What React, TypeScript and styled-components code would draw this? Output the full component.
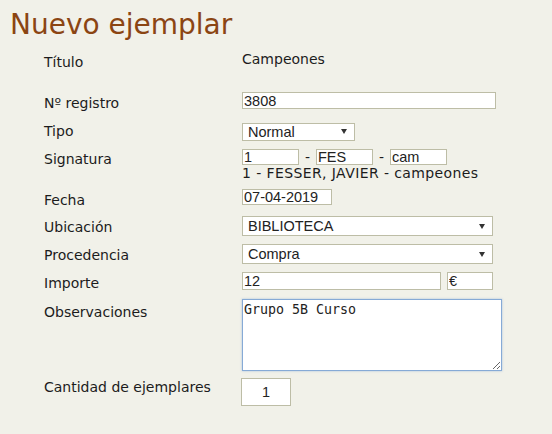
import React from "react";
import styled, { createGlobalStyle } from "styled-components";

const GlobalStyle = createGlobalStyle`
  html, body {
    margin: 0;
    background-color: #f1f1e9;
  }
  body {
    min-height: 100vh;
    font-family: "DejaVu Sans", Verdana, sans-serif;
  }
`;

const Page = styled.main`
  width: 552px;
  height: 434px;
  overflow: hidden;
`;

const Title = styled.h1`
  margin: 0;
  padding: 8px 0 8px 10px;
  font-size: 28px;
  line-height: 34px;
  font-weight: normal;
  color: #8b4513;
`;

const Form = styled.form`
  padding-left: 44px;
`;

const Row = styled.div<{ $h: number }>`
  display: grid;
  grid-template-columns: 198px 1fr;
  align-items: start;
  height: ${(p) => p.$h}px;
`;

const Label = styled.div<{ $pt?: number }>`
  font-size: 14px;
  line-height: 18px;
  padding-top: ${(p) => p.$pt ?? 0}px;
  color: #1c1c1c;
`;

const Text = styled.div<{ $lh?: number; $ls?: number }>`
  font-size: 14px;
  line-height: ${(p) => p.$lh ?? 18}px;
  letter-spacing: ${(p) => p.$ls ?? 0}px;
  color: #1c1c1c;
`;

const Line = styled.div`
  display: flex;
  align-items: center;
`;

const Input = styled.input<{ $w: number; $h: number; $center?: boolean }>`
  box-sizing: border-box;
  width: ${(p) => p.$w}px;
  height: ${(p) => p.$h}px;
  margin: 0;
  padding: 0 1px;
  border: 1px solid #bdbda6;
  background: #fff;
  font-family: "Liberation Sans", Arial, sans-serif;
  font-size: 14.5px;
  color: #222;
  text-align: ${(p) => (p.$center ? "center" : "left")};
  outline: none;
`;

const Dash = styled.span`
  width: 17px;
  text-align: center;
  font-size: 14px;
  color: #1c1c1c;
`;

const SelectBox = styled.span<{ $w: number; $h: number }>`
  position: relative;
  display: inline-block;
  width: ${(p) => p.$w}px;
  height: ${(p) => p.$h}px;

  &::after {
    content: "";
    position: absolute;
    right: 8px;
    top: 50%;
    margin-top: -2px;
    border-left: 3px solid transparent;
    border-right: 3px solid transparent;
    border-top: 5px solid #333;
    pointer-events: none;
  }
`;

const Select = styled.select`
  appearance: none;
  box-sizing: border-box;
  width: 100%;
  height: 100%;
  margin: 0;
  padding: 0 0 0 5px;
  border: 1px solid #bdbda6;
  border-radius: 0;
  background: #fff;
  font-family: "Liberation Sans", Arial, sans-serif;
  font-size: 14.5px;
  color: #222;
  outline: none;
`;

const Notes = styled.textarea`
  box-sizing: border-box;
  width: 260px;
  height: 72px;
  margin: 0;
  padding: 2px 1px;
  border: 1px solid #86aad6;
  box-shadow: 0 0 2px rgba(120, 160, 215, 0.6);
  background: #fff;
  font-family: "DejaVu Sans Mono", "Liberation Mono", monospace;
  font-size: 13.3px;
  color: #222;
  outline: none;
`;

const Qty = styled(Input)`
  margin-left: -1px;
`;

const Gap = styled.span`
  width: 6px;
`;

export default function App() {
  return (
    <Page>
      <GlobalStyle />
      <Title>Nuevo ejemplar</Title>
      <Form onSubmit={(e) => e.preventDefault()}>
        <Row $h={42}>
          <Label $pt={3}>Título</Label>
          <Text>Campeones</Text>
        </Row>
        <Row $h={30}>
          <Label $pt={2}>Nº registro</Label>
          <Input $w={254} $h={17} defaultValue="3808" />
        </Row>
        <Row $h={27}>
          <Label>Tipo</Label>
          <SelectBox $w={113} $h={18}>
            <Select defaultValue="Normal">
              <option>Normal</option>
            </Select>
          </SelectBox>
        </Row>
        <Row $h={40}>
          <Label $pt={1}>Signatura</Label>
          <div>
            <Line>
              <Input $w={57} $h={16} defaultValue="1" />
              <Dash>-</Dash>
              <Input $w={57} $h={16} defaultValue="FES" />
              <Dash>-</Dash>
              <Input $w={57} $h={16} defaultValue="cam" />
            </Line>
            <Text $lh={16} $ls={0.4}>
              1 - FESSER, JAVIER - campeones
            </Text>
          </div>
        </Row>
        <Row $h={27}>
          <Label $pt={2}>Fecha</Label>
          <Input $w={90} $h={16} defaultValue="07-04-2019" />
        </Row>
        <Row $h={28}>
          <Label $pt={2}>Ubicación</Label>
          <SelectBox $w={251} $h={20}>
            <Select defaultValue="BIBLIOTECA">
              <option>BIBLIOTECA</option>
            </Select>
          </SelectBox>
        </Row>
        <Row $h={28}>
          <Label $pt={2}>Procedencia</Label>
          <SelectBox $w={251} $h={20}>
            <Select defaultValue="Compra">
              <option>Compra</option>
            </Select>
          </SelectBox>
        </Row>
        <Row $h={27}>
          <Label $pt={2}>Importe</Label>
          <Line>
            <Input $w={199} $h={18} defaultValue="12" />
            <Gap />
            <Input $w={46} $h={18} defaultValue="€" />
          </Line>
        </Row>
        <Row $h={79}>
          <Label $pt={4}>Observaciones</Label>
          <Notes defaultValue="Grupo 5B Curso" spellCheck={false} />
        </Row>
        <Row $h={28}>
          <Label>Cantidad de ejemplares</Label>
          <Qty $w={50} $h={28} $center defaultValue="1" />
        </Row>
      </Form>
    </Page>
  );
}
